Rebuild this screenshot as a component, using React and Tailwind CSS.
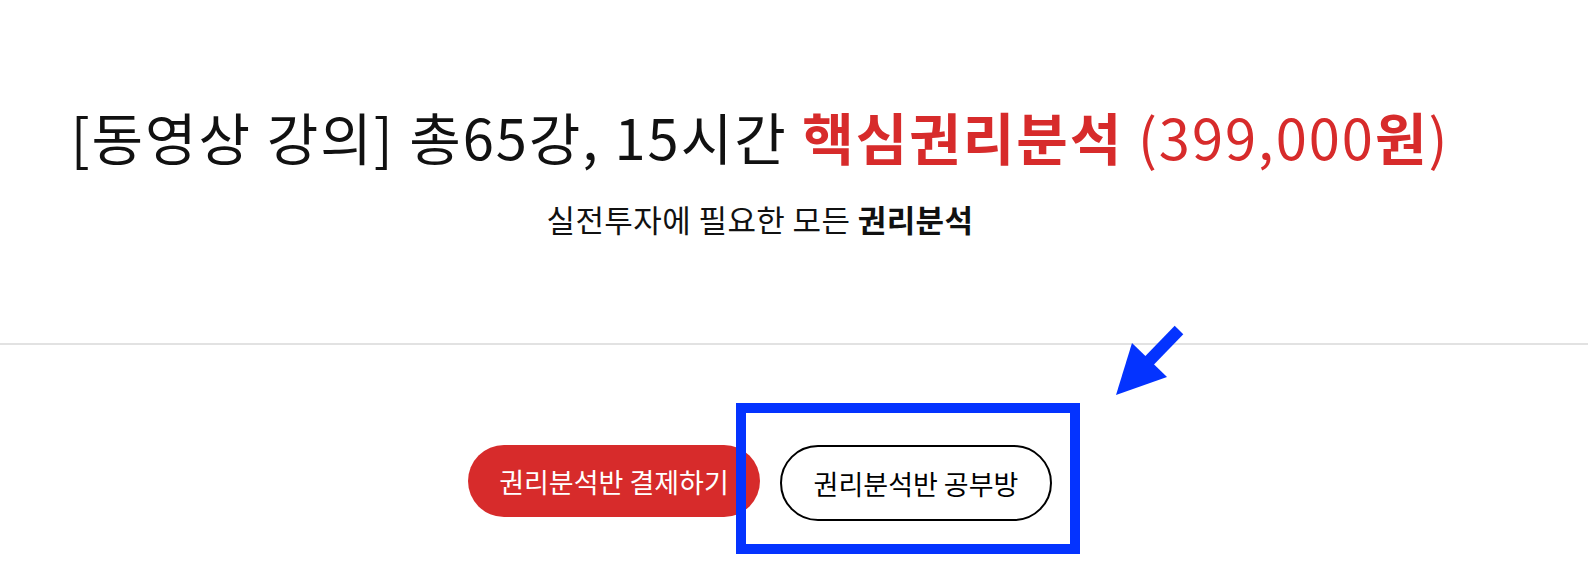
import React from "react";

const font = { fontFamily: '"Noto Sans CJK KR", "Noto Sans", sans-serif' };

const Arrow = () => (
  <svg
    className="absolute left-[1090px] top-[310px]"
    width="100"
    height="100"
    viewBox="1090 310 100 100"
  >
    <line x1="1148" y1="362" x2="1179" y2="330" stroke="#0433ff" strokeWidth="12" />
    <polygon points="1116,395 1132,343 1167,377" fill="#0433ff" />
  </svg>
);

const App = () => {
  return (
    <div
      className="relative w-full min-h-[582px] bg-white overflow-hidden text-[#111]"
      style={font}
    >
      <div className="w-[1520px] flex flex-col items-center">
        <h1 className="mt-[104px] text-[56px] leading-[64px] font-normal tracking-[2px] whitespace-nowrap">
          [동영상 강의] 총65강, 15시간{" "}
          <span className="text-[#d72b2b]">
            <span className="font-bold">핵심권리분석</span> (399,000
            <span className="font-bold">원</span>)
          </span>
        </h1>
        <p className="mt-[31px] text-[31px] leading-[40px] tracking-[0.4px] whitespace-nowrap">
          실전투자에 필요한 모든 <span className="font-bold">권리분석</span>
        </p>
      </div>

      <div className="mt-[104px] w-full h-[2px] bg-[#e2e2e2]" />

      <div className="w-[1520px] flex justify-center items-start gap-[20px] mt-[100px]">
        <button className="h-[72px] w-[292px] rounded-full bg-[#d72b2b] text-white text-[27px] leading-none">
          권리분석반 결제하기
        </button>
        <button className="h-[76px] w-[272px] rounded-full border-2 border-black bg-white text-black text-[27px] leading-none">
          권리분석반 공부방
        </button>
      </div>

      <div className="absolute left-[736px] top-[403px] w-[344px] h-[151px] border-[10px] border-[#0433ff]" />
      <Arrow />
    </div>
  );
};

export default App;
